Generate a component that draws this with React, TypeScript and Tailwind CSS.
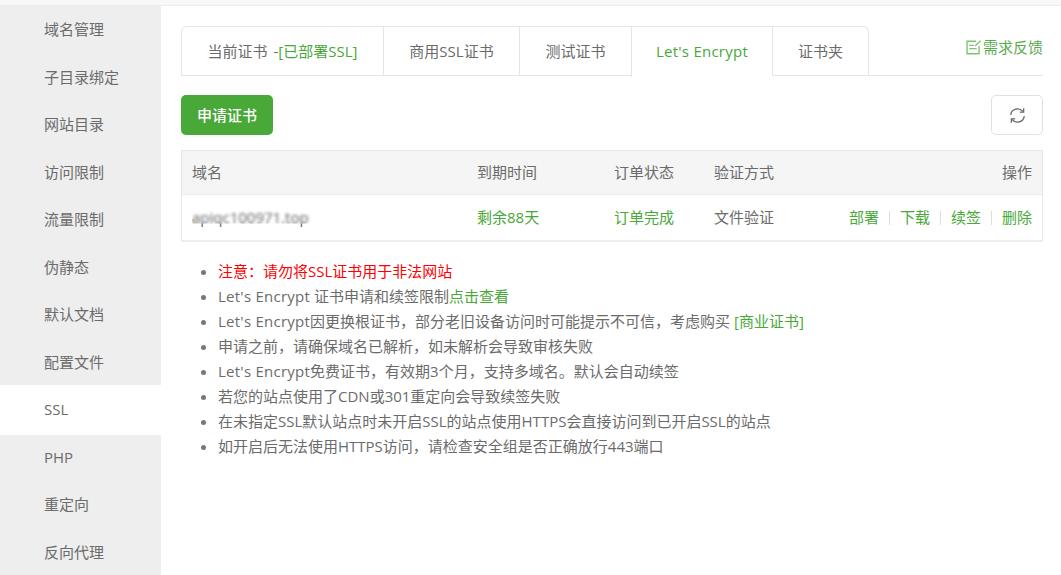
import React from 'react'

const sideItems = ['域名管理', '子目录绑定', '网站目录', '访问限制', '流量限制', '伪静态', '默认文档', '配置文件', 'SSL', 'PHP', '重定向', '反向代理']

const tabs = [
  { label: '商用SSL证书', width: 'w-[136px]' },
  { label: '测试证书', width: 'w-[112px]' },
]

function FeedbackIcon() {
  return (
    <svg viewBox="0 0 14 14" className="h-[15px] w-[15px]" fill="none" stroke="#7fc276" strokeWidth="1.3">
      <path d="M9.5 1.2H1v11.6h11.2V5.5" />
      <path d="M3 5h4.5M3 8h7" />
      <path d="M8.5 5.5 13.5 .8" />
    </svg>
  )
}

function RefreshIcon() {
  return (
    <svg viewBox="0 0 16 16" className="h-[17px] w-[17px]" fill="none" stroke="#666" strokeWidth="1.2">
      <path d="M1.6 7.4A6.4 6.4 0 0 1 13 4.2" />
      <path d="M13.8 1.2v3.6h-3.6" />
      <path d="M14.4 8.6A6.4 6.4 0 0 1 3 11.8" />
      <path d="M2.2 14.8v-3.6h3.6" />
    </svg>
  )
}

function LetsEncrypt() {
  return <span className="tracking-[0.25px]">Let's Encrypt</span>
}

function Sidebar() {
  return (
    <aside className="w-[161px] shrink-0 bg-[#eeeeee]">
      {sideItems.map(item =>
        item === 'SSL' ? (
          <div key={item} className="relative -my-[1.25px] flex h-[50px] items-center bg-white pb-px pl-11">
            {item}
          </div>
        ) : (
          <div key={item} className="flex h-[47.5px] items-center pb-px pl-11">
            {item}
          </div>
        ),
      )}
    </aside>
  )
}

function Tabs() {
  return (
    <div className="flex h-[50px] items-start justify-between border-b border-[#e5e5e5]">
      <div className="flex h-[50px] rounded-t-md border-x border-t border-[#e5e5e5]">
        <div className="flex h-[48px] w-[201px] items-center justify-center">
          <span>当前证书 <span className="ml-[2px]">-</span><span className="text-[#48a838]">[已部署SSL]</span></span>
        </div>
        {tabs.map(tab => (
          <div key={tab.label} className={`flex h-[48px] items-center justify-center border-l border-[#e5e5e5] ${tab.width}`}>
            {tab.label}
          </div>
        ))}
        <div className="flex h-[50px] w-[141px] items-center justify-center border-l border-[#e5e5e5] bg-white pb-[2px] text-[#48a838]">
          <LetsEncrypt />
        </div>
        <div className="flex h-[48px] w-[96px] items-center justify-center border-l border-[#e5e5e5]">证书夹</div>
      </div>
      <a className="mt-[10px] flex items-center gap-[2px] text-[#59ac4e]">
        <FeedbackIcon />
        需求反馈
      </a>
    </div>
  )
}

function CertTable() {
  return (
    <div className="mt-[15px] border border-b-2 border-[#e6e6e6] border-b-[#eceef4]">
      <div className="grid h-[44px] grid-cols-[285px_137px_100px_1fr_auto] items-center border-b border-[#eeeef2] bg-[#f5f5f5] px-[10px]">
        <span>域名</span>
        <span>到期时间</span>
        <span>订单状态</span>
        <span>验证方式</span>
        <span>操作</span>
      </div>
      <div className="grid h-[45px] grid-cols-[285px_137px_100px_1fr_auto] items-center px-[10px]">
        <span className="relative">
          apiqc100971.top
          <span className="absolute left-0 top-[4px] h-[14px] w-[119px] backdrop-blur-[1.5px]" />
        </span>
        <span className="text-[#48a838]">剩余88天</span>
        <span className="text-[#48a838]">订单完成</span>
        <span>文件验证</span>
        <span className="flex items-center text-[#48a838]">
          <a>部署</a>
          <i className="mx-[10px] h-[14px] w-px bg-[#dddddd]" />
          <a>下载</a>
          <i className="mx-[10px] h-[14px] w-px bg-[#dddddd]" />
          <a>续签</a>
          <i className="mx-[10px] h-[14px] w-px bg-[#dddddd]" />
          <a>删除</a>
        </span>
      </div>
    </div>
  )
}

function Notes() {
  return (
    <ul className="mt-[17px] list-disc pl-[37px] leading-[25px] marker:text-[#777]">
      <li className="text-[#ff0000]">注意：请勿将SSL证书用于非法网站</li>
      <li><LetsEncrypt /> 证书申请和续签限制<a className="text-[#48a838]">点击查看</a></li>
      <li><LetsEncrypt />因更换根证书，部分老旧设备访问时可能提示不可信，考虑购买 <a className="text-[#48a838]">[商业证书]</a></li>
      <li>申请之前，请确保域名已解析，如未解析会导致审核失败</li>
      <li><LetsEncrypt />免费证书，有效期3个月，支持多域名。默认会自动续签</li>
      <li>若您的站点使用了CDN或301重定向会导致续签失败</li>
      <li>在未指定SSL默认站点时未开启SSL的站点使用HTTPS会直接访问到已开启SSL的站点</li>
      <li>如开启后无法使用HTTPS访问，请检查安全组是否正确放行443端口</li>
    </ul>
  )
}

export default function App() {
  return (
    <div className="h-[575px] w-[1061px] overflow-hidden bg-white font-['Open_Sans','Noto_Sans_CJK_SC',sans-serif] text-[15px] text-[#6b6b6b]">
      <div className="h-[6px] border-b border-[#ececec] bg-[#f8f8f8]" />
      <div className="flex h-[569px]">
        <Sidebar />
        <main className="flex-1 pl-5 pr-[18px] pt-5">
          <Tabs />
          <div className="mt-[19px] flex items-center justify-between">
            <button className="h-10 w-[92px] rounded-[5px] bg-[#48a838] font-medium text-white">申请证书</button>
            <button className="flex h-10 w-[52px] items-center justify-center rounded-[5px] border border-[#e0e0e6] bg-white">
              <RefreshIcon />
            </button>
          </div>
          <CertTable />
          <Notes />
        </main>
      </div>
    </div>
  )
}
